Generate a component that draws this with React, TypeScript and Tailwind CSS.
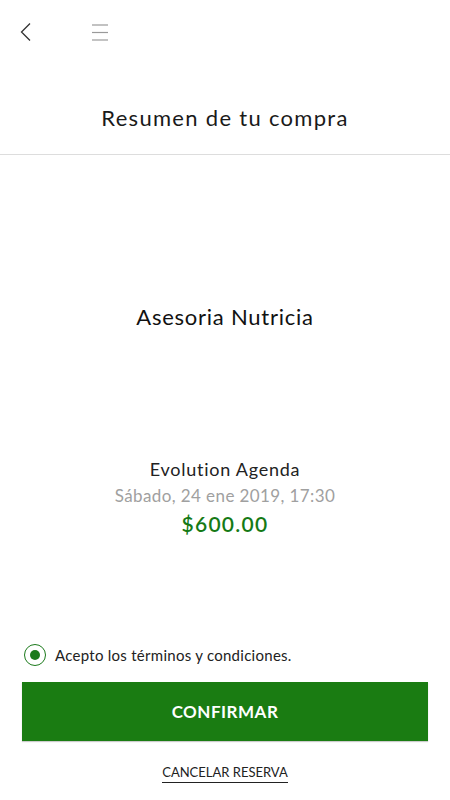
import React from "react";

export default function App() {
  return (
    <div className="w-[450px] h-[800px] bg-white flex flex-col" style={{ fontFamily: "Lato, 'Open Sans', sans-serif" }}>
      <div className="h-[64px] flex items-center pl-[19px]">
        <svg width="14" height="20" viewBox="0 0 14 20">
          <path d="M11 1.5 L2.5 10 L11 18.5" fill="none" stroke="#333" strokeWidth="1.3" />
        </svg>
        <svg width="18" height="18" viewBox="0 0 18 18" className="ml-[58px]">
          <line x1="1" y1="2" x2="17" y2="2" stroke="#9a9a9a" strokeWidth="1.2" />
          <line x1="1" y1="9.5" x2="17" y2="9.5" stroke="#9a9a9a" strokeWidth="1.2" />
          <line x1="1" y1="17" x2="17" y2="17" stroke="#9a9a9a" strokeWidth="1.2" />
        </svg>
      </div>
      <div className="h-[91px] flex items-center justify-center border-b border-[#dddddd] pt-[17px]">
        <span className="text-[22px] text-[#1a1a1a] tracking-[1.3px]">Resumen de tu compra</span>
      </div>
      <div className="h-[178px] flex items-end justify-center">
        <span className="text-[22px] text-[#111] tracking-[0.75px]">Asesoria Nutricia</span>
      </div>
      <div className="flex-1 flex flex-col items-center pt-[123px]">
        <span className="text-[18px] text-[#222] leading-[26px] tracking-[0.75px]">Evolution Agenda</span>
        <span className="text-[17px] text-[#a0a0a0] leading-[24px] tracking-[0.4px] mt-[2px]">Sábado, 24 ene 2019, 17:30</span>
        <span className="text-[21px] font-semibold text-[#157a15] leading-[32px] tracking-[1.3px]">$600.00</span>
      </div>
      <div className="flex items-center gap-[9px] pl-[24px]">
        <div className="w-[22px] h-[22px] rounded-full border-[1.5px] border-[#1b7a1b] flex items-center justify-center">
          <div className="w-[10px] h-[10px] rounded-full bg-[#1b7a1b]" />
        </div>
        <span className="text-[15px] text-[#222] tracking-[0.27px]">Acepto los términos y condiciones.</span>
      </div>
      <div className="px-[22px] mt-[16px]">
        <button className="w-full h-[59px] bg-[#1a7c12] text-white font-bold text-[17px] tracking-[0.5px] shadow-[0_1px_1px_rgba(0,0,0,0.2)]">CONFIRMAR</button>
      </div>
      <div className="flex justify-center mt-[22px] h-[37px]">
        <span className="text-[13px] text-[#222] border-b border-[#222] leading-[18px] h-[20px]">CANCELAR RESERVA</span>
      </div>
    </div>
  );
}
